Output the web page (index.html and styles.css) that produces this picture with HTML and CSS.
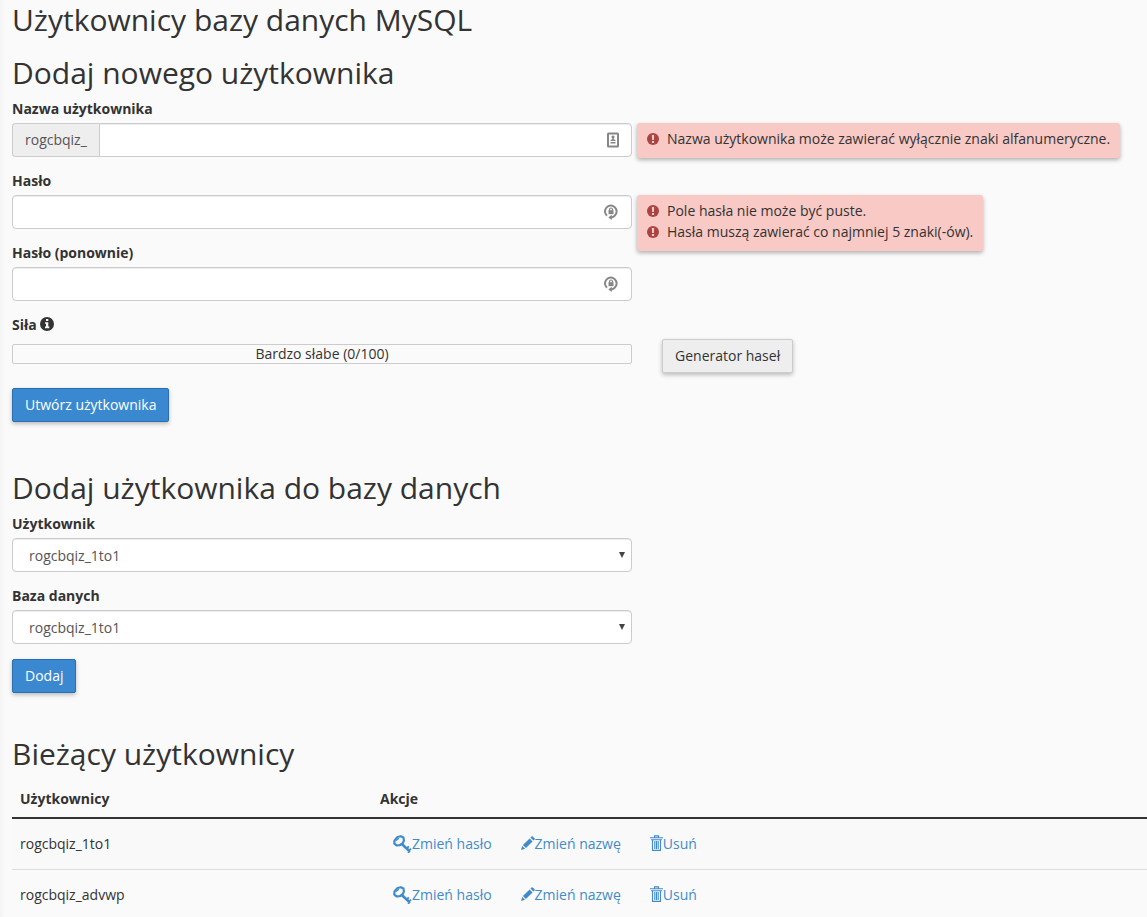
FILE: index.html
```html
<!DOCTYPE html>
<html lang="pl">
<head>
<meta charset="utf-8">
<meta name="viewport" content="width=device-width, initial-scale=1">
<title>Użytkownicy bazy danych MySQL</title>
<link rel="stylesheet" href="styles.css">
</head>
<body>
<svg class="sprite" aria-hidden="true">
  <symbol id="i-alert" viewBox="0 0 12 12">
    <circle cx="6" cy="6" r="6" fill="#a94442"/>
    <path d="M4.800 2h2.400l-.3 5H5.100zM4.900 7.900h2.200v2H4.900z" fill="#f8c9c5"/>
  </symbol>
  <symbol id="i-info" viewBox="0 0 14 14">
    <circle cx="7" cy="7" r="7" fill="#333"/>
    <path d="M6 2h2.300v1.900H6zM5 5.200h3.300v4.300h1v1.700H5V9.500h1V6.800H5z" fill="#fafafa"/>
  </symbol>
  <symbol id="i-card" viewBox="0 0 12 16">
    <rect x="1" y="1.500" width="10" height="13" rx=".5" fill="none" stroke="#868686" stroke-width="2"/>
    <path d="M6 3.500a1.500 1.500 0 0 1 .8 2.800v1l1.700.8v1H3.500v-1l1.700-.8v-1A1.500 1.500 0 0 1 6 3.500zM3.500 10h5v1.500h-5z" fill="#868686"/>
  </symbol>
  <symbol id="i-lock" viewBox="0 0 14 16">
    <path d="M3 11.800A5.800 5.800 0 1 1 11 11.400Q9.600 13.300 7 13.500" fill="none" stroke="#868686" stroke-width="2"/>
    <path d="M4.300 13.500l3.400-2.700v5.200z" fill="#868686"/>
    <path d="M5.500 7V5.500a1.500 1.500 0 0 1 3 0V7" fill="none" stroke="#868686" stroke-width="1.200"/>
    <rect x="4.500" y="6.200" width="5" height="4" fill="#868686"/>
  </symbol>
  <symbol id="i-key" viewBox="0 0 19 18">
    <path d="M4.500 2L7.800 1.200l2.700 1.400.4 3-1.200 2.700-3 1.900-2.900.3L1.300 8.600l.2-3.200z" fill="none" stroke="#428bca" stroke-width="2.200" stroke-linejoin="round"/>
    <path d="M3.200 5.600L5.800 3.200" stroke="#428bca" stroke-width="1.200"/>
    <path d="M8.800 9l7.300 6.800" fill="none" stroke="#428bca" stroke-width="2.600"/>
    <path d="M13.500 13.800l2.300-2.500M15.800 16l2.200-2.400M15 17.800l2-2" fill="none" stroke="#428bca" stroke-width="1.800"/>
  </symbol>
  <symbol id="i-pencil" viewBox="0 0 14 14">
    <path d="M0 14l1.200-4.100 2.900 2.900zM1.900 9.100l6.700-6.700 3 3-6.700 6.700zM9.400 1.600L10.600.4q.5-.5 1.100 0L13.600 2.300q.5.500 0 1.100L12.400 4.600z" fill="#428bca"/>
  </symbol>
  <symbol id="i-trash" viewBox="0 0 13 16">
    <path d="M4.500 2.500V.9h4v1.600M0 2.700h13M1 4.700h11M2.500 4.700v10.700h8V4.700M4.800 6v8M6.500 6v8M8.200 6v8" fill="none" stroke="#428bca" stroke-width="1.100"/>
  </symbol>
</svg>
<main class="page">
  <h1 class="heading">Użytkownicy bazy danych MySQL</h1>

  <form class="section">
    <h2 class="heading">Dodaj nowego użytkownika</h2>
    <div class="field">
      <label class="label" for="username">Nazwa użytkownika</label>
      <div class="row">
        <div class="group">
          <span class="addon">rogcbqiz_</span>
          <div class="wrap">
            <input class="control joined" id="username" type="text">
            <svg class="hint card"><use href="#i-card"/></svg>
          </div>
        </div>
        <ul class="errors">
          <li class="error"><svg class="alert"><use href="#i-alert"/></svg>Nazwa użytkownika może zawierać wyłącznie znaki alfanumeryczne.</li>
        </ul>
      </div>
    </div>
    <div class="field">
      <label class="label" for="password">Hasło</label>
      <div class="row">
        <div class="wrap">
          <input class="control" id="password" type="password">
          <svg class="hint"><use href="#i-lock"/></svg>
        </div>
        <ul class="errors">
          <li class="error"><svg class="alert"><use href="#i-alert"/></svg>Pole hasła nie może być puste.</li>
          <li class="error"><svg class="alert"><use href="#i-alert"/></svg>Hasła muszą zawierać co najmniej 5 znaki(-ów).</li>
        </ul>
      </div>
    </div>
    <div class="field">
      <label class="label" for="password2">Hasło (ponownie)</label>
      <div class="row">
        <div class="wrap">
          <input class="control" id="password2" type="password">
          <svg class="hint"><use href="#i-lock"/></svg>
        </div>
      </div>
    </div>
    <div class="field last">
      <span class="label" id="strength-label">Siła <svg class="info"><use href="#i-info"/></svg></span>
      <div class="row meter-row">
        <div class="meter" role="progressbar" aria-labelledby="strength-label" aria-valuenow="0" aria-valuemin="0" aria-valuemax="100">Bardzo słabe (0/100)</div>
        <button class="btn" type="button">Generator haseł</button>
      </div>
    </div>
    <button class="btn primary" type="button">Utwórz użytkownika</button>
  </form>

  <form class="section spaced">
    <h2 class="heading">Dodaj użytkownika do bazy danych</h2>
    <div class="field">
      <label class="label" for="user">Użytkownik</label>
      <div class="row">
        <div class="wrap">
          <select class="control select" id="user"><option>rogcbqiz_1to1</option></select>
          <svg class="arrow" viewBox="0 0 6 6"><path d="M0 0h6L3 6z" fill="#444"/></svg>
        </div>
      </div>
    </div>
    <div class="field last">
      <label class="label" for="database">Baza danych</label>
      <div class="row">
        <div class="wrap">
          <select class="control select" id="database"><option>rogcbqiz_1to1</option></select>
          <svg class="arrow" viewBox="0 0 6 6"><path d="M0 0h6L3 6z" fill="#444"/></svg>
        </div>
      </div>
    </div>
    <button class="btn primary" type="button">Dodaj</button>
  </form>

  <section class="section list">
    <h2 class="heading">Bieżący użytkownicy</h2>
    <table class="table">
      <thead>
        <tr><th class="name-col">Użytkownicy</th><th>Akcje</th></tr>
      </thead>
      <tbody>
        <tr>
          <td>rogcbqiz_1to1</td>
          <td><div class="actions">
            <a class="action" href="#"><svg class="key"><use href="#i-key"/></svg>Zmień hasło</a>
            <a class="action" href="#"><svg class="pencil"><use href="#i-pencil"/></svg>Zmień nazwę</a>
            <a class="action" href="#"><svg class="trash"><use href="#i-trash"/></svg>Usuń</a>
          </div></td>
        </tr>
        <tr>
          <td>rogcbqiz_advwp</td>
          <td><div class="actions">
            <a class="action" href="#"><svg class="key"><use href="#i-key"/></svg>Zmień hasło</a>
            <a class="action" href="#"><svg class="pencil"><use href="#i-pencil"/></svg>Zmień nazwę</a>
            <a class="action" href="#"><svg class="trash"><use href="#i-trash"/></svg>Usuń</a>
          </div></td>
        </tr>
      </tbody>
    </table>
  </section>
</main>
</body>
</html>
```
FILE: styles.css
```css
* { box-sizing: border-box; }

body {
  margin: 0;
  background: #fafafa linear-gradient(to right, #f4f4f4, #fafafa) no-repeat left top / 5px 100%;
  color: #333;
  font: 14px/20px "Open Sans", "Noto Sans", sans-serif;
}

.sprite { position: absolute; width: 0; height: 0; }

.page { padding: 3px 0 0 12px; }

.heading {
  margin: 0 0 10px;
  font-size: 30px;
  font-weight: 400;
  line-height: 33px;
}

.section { margin-top: 20px; }
.section.spaced { margin-top: 49px; }
.section.list { margin-top: 44px; }

.field { margin-bottom: 14px; }
.field.last { margin-bottom: 15px; }

.label {
  display: block;
  width: fit-content;
  margin-bottom: 4px;
  font-weight: 700;
}

.row {
  display: grid;
  grid-template-columns: minmax(0, 620px) minmax(0, 1fr);
  column-gap: 5px;
  align-items: start;
  height: 34px;
}

.group { display: flex; }

.addon {
  padding: 6px 12px;
  border: 1px solid #ccc;
  border-right: 0;
  border-radius: 4px 0 0 4px;
  background: #eee;
  color: #555;
}

.wrap { position: relative; flex: 1; }

.control {
  display: block;
  width: 100%;
  height: 34px;
  padding: 6px 40px 6px 12px;
  border: 1px solid #ccc;
  border-radius: 4px;
  background: #fff;
  box-shadow: inset 0 1px 1px rgba(0, 0, 0, .075);
  color: #555;
  font: inherit;
}

.joined { border-radius: 0 4px 4px 0; }

.select { appearance: none; padding: 7px 16px 5px; }

.hint {
  position: absolute;
  top: 9px;
  right: 14px;
  width: 14px;
  height: 16px;
}

.hint.card { right: 13px; width: 12px; }

.arrow {
  position: absolute;
  top: 14px;
  right: 7px;
  width: 6px;
  height: 6px;
  pointer-events: none;
}

.errors {
  justify-self: start;
  margin: 0;
  padding: 5px 10px 9px;
  border-radius: 3px;
  background: #f8c9c5;
  box-shadow: 0 2px 4px rgba(0, 0, 0, .3);
  list-style: none;
}

.error { display: flex; align-items: center; gap: 8px; line-height: 21px; }

.alert { flex: none; width: 12px; height: 12px; }

.info { width: 14px; height: 14px; vertical-align: -1px; }

.meter-row { column-gap: 30px; }

.meter {
  margin-top: 5px;
  border: 1px solid #ccc;
  border-radius: 2px;
  line-height: 18px;
  text-align: center;
}

.btn {
  justify-self: start;
  padding: 6px 12px;
  border: 1px solid #ccc;
  border-radius: 2px;
  background: #eee;
  box-shadow: 0 2px 4px rgba(0, 0, 0, .25);
  color: #333;
  font: inherit;
  cursor: pointer;
}

.btn.primary {
  display: block;
  border-color: #2a6fb0;
  background: #3a89d0;
  color: #fff;
}

.table { width: 100%; border-collapse: collapse; }

.table th {
  padding: 9px 8px 8px;
  border-bottom: 2px solid #333;
  text-align: left;
}

.table td { padding: 15px 8px; border-bottom: 1px solid #ddd; }

.table tbody tr:nth-child(odd) { background: #f9f9f9; }

.name-col { width: 360px; }

.actions { display: flex; gap: 3px; }

.action {
  display: flex;
  align-items: center;
  padding: 0 13px;
  color: #428bca;
  text-decoration: none;
}

.key { width: 19px; height: 18px; }
.pencil { width: 14px; height: 14px; margin-bottom: 2px; }
.trash { width: 13px; height: 16px; margin-bottom: 3px; }
```
